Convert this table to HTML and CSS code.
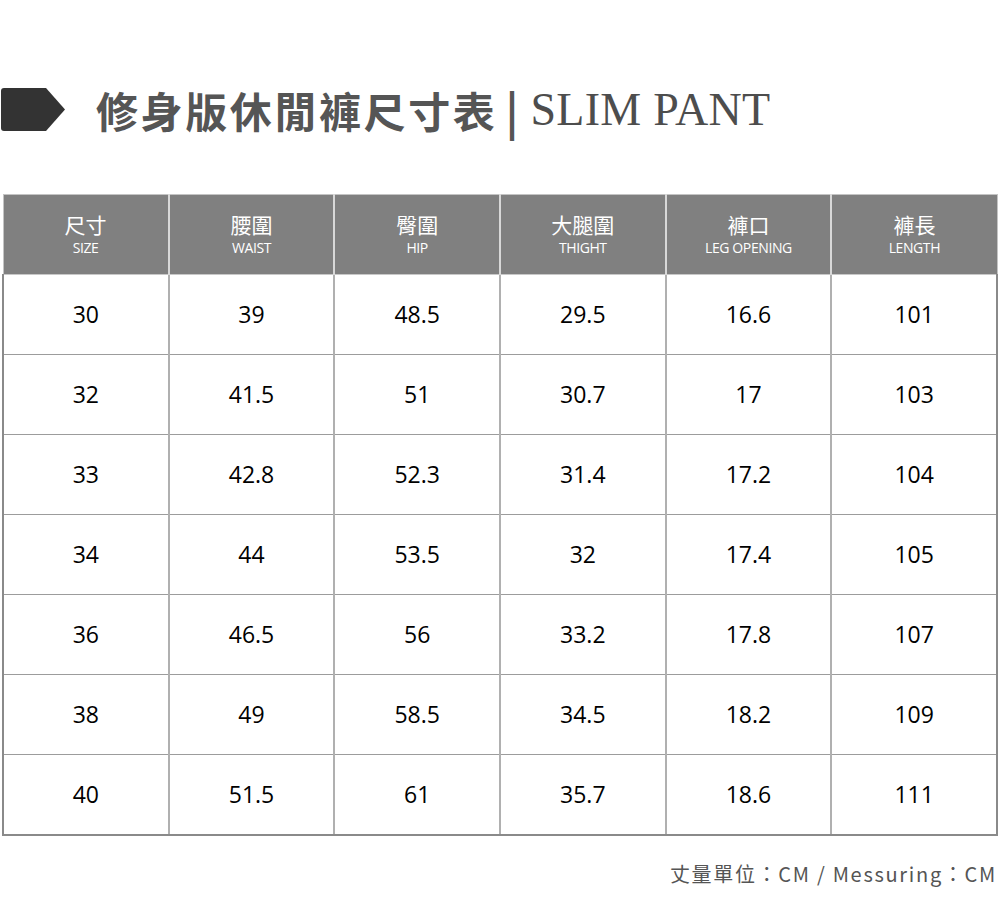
FILE: index.html
```html
<!DOCTYPE html>
<html lang="zh-Hant">
<head>
<meta charset="utf-8">
<title>修身版休閒褲尺寸表</title>
<link rel="stylesheet" href="styles.css">
</head>
<body>
<div class="page">
  <h1 class="title">
    <svg class="arrow" width="64" height="43" viewBox="0 0 64 43"><path d="M3 0 H45 L64 21.5 L45 43 H3 Q0 43 0 40 V3 Q0 0 3 0 Z" fill="#333"/></svg>
    <span class="zh">修身版休閒褲尺寸表</span><span class="bar">|</span><span class="en">SLIM PANT</span>
  </h1>
  <table class="size-table">
    <thead>
      <tr>
        <th><span class="zh-h">尺寸</span><span class="en-h">SIZE</span></th>
        <th><span class="zh-h">腰圍</span><span class="en-h">WAIST</span></th>
        <th><span class="zh-h">臀圍</span><span class="en-h">HIP</span></th>
        <th><span class="zh-h">大腿圍</span><span class="en-h">THIGHT</span></th>
        <th><span class="zh-h">褲口</span><span class="en-h">LEG OPENING</span></th>
        <th><span class="zh-h">褲長</span><span class="en-h">LENGTH</span></th>
      </tr>
    </thead>
    <tbody>
      <tr><td>30</td><td>39</td><td>48.5</td><td>29.5</td><td>16.6</td><td>101</td></tr>
      <tr><td>32</td><td>41.5</td><td>51</td><td>30.7</td><td>17</td><td>103</td></tr>
      <tr><td>33</td><td>42.8</td><td>52.3</td><td>31.4</td><td>17.2</td><td>104</td></tr>
      <tr><td>34</td><td>44</td><td>53.5</td><td>32</td><td>17.4</td><td>105</td></tr>
      <tr><td>36</td><td>46.5</td><td>56</td><td>33.2</td><td>17.8</td><td>107</td></tr>
      <tr><td>38</td><td>49</td><td>58.5</td><td>34.5</td><td>18.2</td><td>109</td></tr>
      <tr><td>40</td><td>51.5</td><td>61</td><td>35.7</td><td>18.6</td><td>111</td></tr>
    </tbody>
  </table>
  <p class="unit">丈量單位：CM / Messuring：CM</p>
</div>
</body>
</html>
```
FILE: styles.css
```css
html, body {
  margin: 0;
  padding: 0;
  background: #fff;
}
.page {
  width: 1000px;
  padding-top: 88px;
  font-family: "Noto Sans CJK TC", "Noto Sans", sans-serif;
}
.title {
  display: flex;
  align-items: center;
  margin: 0 0 0 1px;
  height: 43px;
  font-weight: 700;
  color: #555;
}
.arrow {
  flex: none;
  display: block;
}
.title .zh {
  margin-left: 31px;
  font-size: 42px;
  letter-spacing: 2.6px;
  line-height: 43px;
}
.title .bar {
  margin-left: 8px;
  font-size: 44px;
  line-height: 43px;
  font-weight: 700;
  color: #555;
}
.title .en {
  margin-left: 12px;
  font-family: "Liberation Serif", "Times New Roman", serif;
  font-weight: 400;
  font-size: 46px;
  line-height: 43px;
  color: #4d4d4d;
  letter-spacing: 0.3px;
}
.size-table {
  margin: 63px 0 0 2px;
  width: 996px;
  border-collapse: collapse;
  table-layout: fixed;
}
.size-table th {
  height: 79px;
  padding: 0;
  background: #808080;
  color: #fff;
  font-weight: 400;
  vertical-align: middle;
  border-top: 1px solid #c4c4c4;
  border-left: 2px solid #d8d8d8;
  border-bottom: 1px solid #c8c8c8;
}
.size-table th:first-child {
  border-left: 1px solid #c4c4c4;
}
.size-table th:last-child {
  border-right: 1px solid #c4c4c4;
}
.zh-h {
  display: block;
  font-size: 21px;
  line-height: 26px;
  margin-top: 0;
}
.en-h {
  display: block;
  font-family: "Open Sans", sans-serif;
  font-size: 14px;
  letter-spacing: -0.4px;
  line-height: 20px;
  margin-top: 1px;
}
.size-table td {
  height: 77px;
  padding: 0 0 2px;
  text-align: center;
  vertical-align: middle;
  font-family: "Open Sans", sans-serif;
  font-size: 23px;
  color: #000;
  border: 1px solid #9c9c9c;
  border-left-width: 2px;
  border-left-color: #b0b0b0;
}
.size-table td:first-child {
  border-left: 2px solid #8a8a8a;
}
.size-table td:last-child {
  border-right: 2px solid #8a8a8a;
}
.size-table tr:last-child td {
  border-bottom: 2px solid #8a8a8a;
}
.unit {
  margin: 23px 3px 0 0;
  text-align: right;
  font-size: 20px;
  letter-spacing: 1.7px;
  color: #555;
  line-height: 30px;
}
```
